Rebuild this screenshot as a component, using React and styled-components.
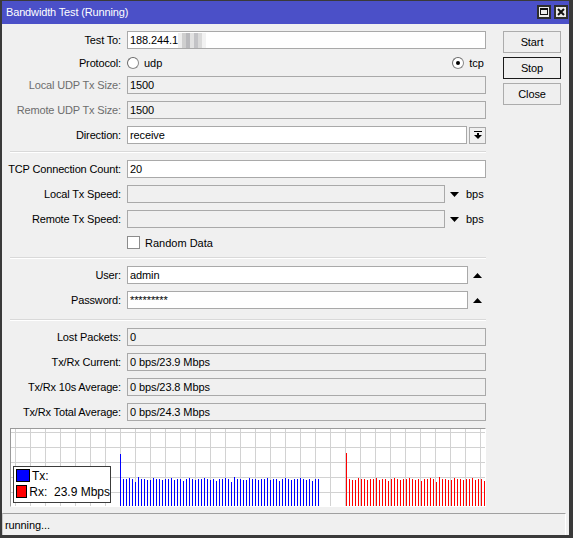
import React from "react";
import styled, { createGlobalStyle } from "styled-components";

const GlobalStyle = createGlobalStyle`
  html, body {
    margin: 0;
    padding: 0;
    background: #ffffff;
  }
  body {
    font-family: "Liberation Sans", Arial, sans-serif;
    font-size: 11px;
    color: #000;
  }
`;

const Window = styled.div`
  width: 573px;
  height: 538px;
  box-sizing: border-box;
  background: #f0f0f0;
  border: 2px solid #3a3a3a;
  border-top-width: 1px;
  border-right-width: 4px;
  border-bottom-width: 3px;
  display: flex;
  flex-direction: column;
`;

const TitleBar = styled.div`
  height: 23px;
  flex: none;
  background: #4b50c8;
  color: #fff;
  display: flex;
  align-items: center;
  justify-content: space-between;
  padding: 0 1px 0 4px;
`;

const Title = styled.span`
  font-size: 11px;
  letter-spacing: -0.15px;
  margin-top: -1px;
`;

const TitleButtons = styled.div`
  display: flex;
  gap: 3px;
  margin-top: -2px;
`;

const TitleButton = styled.div`
  width: 14px;
  height: 14px;
  box-sizing: border-box;
  border: 2px solid #2e2e2e;
  background: #ececec;
  display: flex;
  align-items: center;
  justify-content: center;
`;

const MaxIcon = styled.div`
  width: 8px;
  height: 7px;
  box-sizing: border-box;
  border: 1px solid #111;
  border-top-width: 2px;
`;

const Body = styled.div`
  display: flex;
  padding: 7px 0 0 8px;
`;

const Form = styled.div`
  width: 476px;
  display: flex;
  flex-direction: column;
  gap: 7px;
`;

const Row = styled.div`
  display: grid;
  grid-template-columns: 111px 1fr;
  column-gap: 6px;
  align-items: center;
  height: ${(p) => p.$h || 18}px;
`;

const Label = styled.div`
  display: flex;
  justify-content: flex-end;
  white-space: nowrap;
  letter-spacing: -0.15px;
  color: ${(p) => (p.$disabled ? "#6d6d6d" : "#000")};
`;

const Field = styled.div`
  height: 18px;
  box-sizing: border-box;
  border: 1px solid #a9a9a9;
  background: ${(p) => (p.$disabled ? "#f0f0f0" : "#ffffff")};
  padding: 0 2px;
  line-height: 16px;
  white-space: nowrap;
  overflow: hidden;
  flex: 1;
  min-width: 0;
  letter-spacing: -0.1px;
`;

const Masked = styled.span`
  display: inline-block;
  width: 28px;
  height: 15px;
  vertical-align: top;
  margin-top: 1px;
  background: linear-gradient(
    90deg,
    #ededed 0 4px,
    #cfcfcf 4px 8px,
    #b9b9bc 8px 12px,
    #e2e2e2 12px 16px,
    #c3c3c6 16px 20px,
    #dadada 20px 24px,
    #f2f2f2 24px
  );
`;

const FieldGroup = styled.div`
  display: flex;
  align-items: center;
  min-width: 0;
`;

const Suffix = styled.div`
  width: ${(p) => p.$w}px;
  flex: none;
  display: flex;
  align-items: center;
`;

const DropButton = styled.div`
  width: 17px;
  height: 17px;
  box-sizing: border-box;
  margin-left: 2px;
  border: 1px solid #a9a9a9;
  background: #f0f0f0;
  display: flex;
  align-items: center;
  justify-content: center;
`;

const Unit = styled.span`
  margin-left: 7px;
`;

const Choices = styled.div`
  display: flex;
  justify-content: space-between;
  align-items: center;
  padding-right: 2px;
`;

const Choice = styled.div`
  display: flex;
  align-items: center;
  gap: 5px;
`;

const Radio = styled.span`
  width: 12px;
  height: 12px;
  box-sizing: border-box;
  border-radius: 50%;
  border: 1px solid #8a8a8a;
  border-top-color: #6a6a6a;
  border-left-color: #6a6a6a;
  background: #fff;
  display: flex;
  align-items: center;
  justify-content: center;
  &::after {
    content: "";
    width: 4px;
    height: 4px;
    border-radius: 50%;
    background: ${(p) => (p.$checked ? "#000" : "transparent")};
  }
`;

const CheckRow = styled.div`
  display: flex;
  align-items: center;
  gap: 5px;
`;

const Checkbox = styled.span`
  width: 13px;
  height: 13px;
  box-sizing: border-box;
  border: 1px solid #8c8c8c;
  background: #fff;
`;

const Separator = styled.div`
  height: 0;
  border-top: 1px solid #d9d9d9;
  border-bottom: 1px solid #ffffff;
  margin-top: ${(p) => p.$extra || 0}px;
`;

const Chart = styled.div`
  position: relative;
  height: 79px;
  box-sizing: border-box;
  background: #fff;
  border-top: 1px solid #9a9a9a;
  border-left: 1px solid #9a9a9a;
  border-right: 1px solid #ffffff;
  border-bottom: 1px solid #ffffff;
`;

const Legend = styled.div`
  position: absolute;
  left: 2px;
  top: 37px;
  width: 98px;
  height: 37px;
  box-sizing: border-box;
  border: 1px solid #3c3c3c;
  background: #fff;
  padding: 2px 0 0 2px;
  display: flex;
  flex-direction: column;
  gap: 3px;
`;

const LegendItem = styled.div`
  display: flex;
  align-items: center;
  gap: 2px;
  height: 13px;
  font-size: 12px;
  white-space: pre;
`;

const Swatch = styled.span`
  width: 14px;
  height: 13px;
  box-sizing: border-box;
  border: 1px solid #000;
  background: ${(p) => p.$color};
`;

const Buttons = styled.div`
  margin-left: 17px;
  display: flex;
  flex-direction: column;
  gap: 4px;
`;

const Button = styled.div`
  width: 58px;
  height: 22px;
  box-sizing: border-box;
  border: 1px solid ${(p) => (p.$focused ? "#1a1a1a" : "#acacac")};
  background: #efefef;
  display: flex;
  align-items: center;
  justify-content: center;
  letter-spacing: -0.1px;
`;

const StatusBar = styled.div`
  margin: 6px 3px 0 0;
  height: 22px;
  box-sizing: border-box;
  border-top: 1px solid #a0a0a0;
  border-left: 1px solid #c8c8c8;
  border-right: 1px solid #ffffff;
  display: flex;
  align-items: center;
  padding-left: 2px;
  letter-spacing: -0.1px;
`;

const ArrowDown = () => (
  <svg width="9" height="5" viewBox="0 0 9 5">
    <polygon points="0,0 9,0 4.5,5" fill="#000" />
  </svg>
);

const ArrowUp = () => (
  <svg width="9" height="5" viewBox="0 0 9 5">
    <polygon points="0,5 9,5 4.5,0" fill="#000" />
  </svg>
);

const DropIcon = () => (
  <svg width="8" height="8" viewBox="0 0 8 8">
    <rect x="0" y="0" width="8" height="1" fill="#000" />
    <rect x="3" y="2" width="2" height="2" fill="#000" />
    <polygon points="0,4 8,4 4,8" fill="#000" />
  </svg>
);

const CloseIcon = () => (
  <svg width="8" height="8" viewBox="0 0 8 8">
    <path d="M1 1 L7 7 M7 1 L1 7" stroke="#111" strokeWidth="2" />
  </svg>
);

const jitter = [0, 0, -1, 0, 3, -2, 0, 0, 1, 1, -1, 0, 0, 1, 0, 0, -1, 1, 0, 0, 2, 0, -1, 0, 1, 0, 0, -1, 0, 1, 0, 2];

const GraphLines = () => {
  const vLines = [];
  for (let k = 1; k <= 32; k++) vLines.push(15 * k - 11 + 0.5);
  const hLines = [3, 18, 33, 48, 63].map((y) => y + 0.5);
  const bars = [];
  bars.push({ x: 109, top: 25, color: "#0000ff" });
  for (let i = 0; i < 66; i++) {
    bars.push({ x: 112 + 3 * i, top: 50 + jitter[i % jitter.length], color: "#0000ff" });
  }
  bars.push({ x: 335, top: 24, color: "#ff0000" });
  for (let i = 0; i < 46; i++) {
    bars.push({ x: 338 + 3 * i, top: 50 + jitter[(i + 7) % jitter.length], color: "#ff0000" });
  }
  return (
    <svg width="474" height="77" viewBox="0 0 474 77" style={{ display: "block" }}>
      {vLines.map((x) => (
        <line key={"v" + x} x1={x} y1="0" x2={x} y2="77" stroke="#d2d2d2" strokeWidth="1" />
      ))}
      {hLines.map((y) => (
        <line key={"h" + y} x1="0" y1={y} x2="474" y2={y} stroke="#d2d2d2" strokeWidth="1" />
      ))}
      {bars.map((b, i) => (
        <rect key={i} x={b.x} y={b.top} width="1" height={77 - b.top} fill={b.color} />
      ))}
    </svg>
  );
};

const App = () => {
  return (
    <>
      <GlobalStyle />
      <Window>
        <TitleBar>
          <Title>Bandwidth Test (Running)</Title>
          <TitleButtons>
            <TitleButton>
              <MaxIcon />
            </TitleButton>
            <TitleButton>
              <CloseIcon />
            </TitleButton>
          </TitleButtons>
        </TitleBar>

        <Body>
          <Form>
            <Row>
              <Label>Test To:</Label>
              <Field>
                188.244.1<Masked />
              </Field>
            </Row>
            <Row $h={13}>
              <Label>Protocol:</Label>
              <Choices>
                <Choice>
                  <Radio />
                  udp
                </Choice>
                <Choice>
                  <Radio $checked />
                  tcp
                </Choice>
              </Choices>
            </Row>
            <Row>
              <Label $disabled>Local UDP Tx Size:</Label>
              <Field $disabled>1500</Field>
            </Row>
            <Row>
              <Label $disabled>Remote UDP Tx Size:</Label>
              <Field $disabled>1500</Field>
            </Row>
            <Row>
              <Label>Direction:</Label>
              <FieldGroup>
                <Field>receive</Field>
                <DropButton>
                  <DropIcon />
                </DropButton>
              </FieldGroup>
            </Row>

            <Separator />

            <Row>
              <Label>TCP Connection Count:</Label>
              <Field>20</Field>
            </Row>
            <Row>
              <Label>Local Tx Speed:</Label>
              <FieldGroup>
                <Field $disabled />
                <Suffix $w={41}>
                  <span style={{ marginLeft: 5, display: "flex" }}>
                    <ArrowDown />
                  </span>
                  <Unit>bps</Unit>
                </Suffix>
              </FieldGroup>
            </Row>
            <Row>
              <Label>Remote Tx Speed:</Label>
              <FieldGroup>
                <Field $disabled />
                <Suffix $w={41}>
                  <span style={{ marginLeft: 5, display: "flex" }}>
                    <ArrowDown />
                  </span>
                  <Unit>bps</Unit>
                </Suffix>
              </FieldGroup>
            </Row>
            <Row $h={15}>
              <span />
              <CheckRow>
                <Checkbox />
                Random Data
              </CheckRow>
            </Row>

            <Separator />

            <Row>
              <Label>User:</Label>
              <FieldGroup>
                <Field>admin</Field>
                <Suffix $w={18}>
                  <span style={{ marginLeft: 5, display: "flex" }}>
                    <ArrowUp />
                  </span>
                </Suffix>
              </FieldGroup>
            </Row>
            <Row>
              <Label>Password:</Label>
              <FieldGroup>
                <Field>*********</Field>
                <Suffix $w={18}>
                  <span style={{ marginLeft: 5, display: "flex" }}>
                    <ArrowUp />
                  </span>
                </Suffix>
              </FieldGroup>
            </Row>

            <Separator $extra={3} />

            <Row>
              <Label>Lost Packets:</Label>
              <Field $disabled>0</Field>
            </Row>
            <Row>
              <Label>Tx/Rx Current:</Label>
              <Field $disabled>0 bps/23.9 Mbps</Field>
            </Row>
            <Row>
              <Label>Tx/Rx 10s Average:</Label>
              <Field $disabled>0 bps/23.8 Mbps</Field>
            </Row>
            <Row>
              <Label>Tx/Rx Total Average:</Label>
              <Field $disabled>0 bps/24.3 Mbps</Field>
            </Row>

            <Chart>
              <GraphLines />
              <Legend>
                <LegendItem>
                  <Swatch $color="#0000ff" />
                  Tx:
                </LegendItem>
                <LegendItem>
                  <Swatch $color="#ff0000" />
                  {"Rx:  23.9 Mbps"}
                </LegendItem>
              </Legend>
            </Chart>
          </Form>

          <Buttons>
            <Button>Start</Button>
            <Button $focused>Stop</Button>
            <Button>Close</Button>
          </Buttons>
        </Body>

        <StatusBar>running...</StatusBar>
      </Window>
    </>
  );
};

export default App;
